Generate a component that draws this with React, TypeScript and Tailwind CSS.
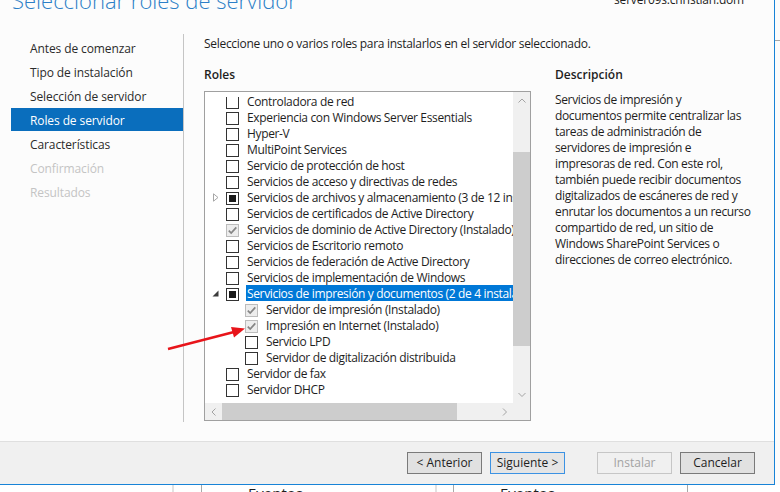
import React from "react";

type BoxState = "empty" | "ind" | "inst";

function Box({ state }: { state: BoxState }) {
  if (state === "inst")
    return (
      <span className="mt-[3px] w-[13px] h-[13px] shrink-0 border border-[#bcbcbc] bg-[#ededed] flex items-center justify-center">
        <svg width="11" height="11" viewBox="0 0 11 11">
          <path d="M1.8 5.6 L4.2 8 L9.3 2.4" fill="none" stroke="#858585" strokeWidth="1.7" />
        </svg>
      </span>
    );
  if (state === "ind")
    return (
      <span className="mt-[3px] w-[13px] h-[13px] shrink-0 border border-[#333333] bg-white flex items-center justify-center">
        <span className="w-[7px] h-[7px] bg-[#1a1a1a]" />
      </span>
    );
  return <span className="mt-[3px] w-[13px] h-[13px] shrink-0 border border-[#333333] bg-white" />;
}

function Collapsed() {
  return (
    <svg width="6" height="9" viewBox="0 0 6 9" className="ml-[2px]">
      <path d="M0.5 0.8 L5 4.5 L0.5 8.2 Z" fill="none" stroke="#a6a6a6" strokeWidth="1" />
    </svg>
  );
}

function Expanded() {
  return (
    <svg width="7" height="7" viewBox="0 0 7 7" className="ml-[1px]">
      <path d="M6.5 0.5 L6.5 6.5 L0.5 6.5 Z" fill="#3c3c3c" />
    </svg>
  );
}

type RowDef = {
  label: string;
  level: 1 | 2;
  state: BoxState;
  exp?: "c" | "e";
  selected?: boolean;
};

const rows: RowDef[] = [
  { label: "Controladora de red", level: 1, state: "empty" },
  { label: "Experiencia con Windows Server Essentials", level: 1, state: "empty" },
  { label: "Hyper-V", level: 1, state: "empty" },
  { label: "MultiPoint Services", level: 1, state: "empty" },
  { label: "Servicio de protección de host", level: 1, state: "empty" },
  { label: "Servicios de acceso y directivas de redes", level: 1, state: "empty" },
  { label: "Servicios de archivos y almacenamiento (3 de 12 instalados)", level: 1, state: "ind", exp: "c" },
  { label: "Servicios de certificados de Active Directory", level: 1, state: "empty" },
  { label: "Servicios de dominio de Active Directory (Instalado)", level: 1, state: "inst" },
  { label: "Servicios de Escritorio remoto", level: 1, state: "empty" },
  { label: "Servicios de federación de Active Directory", level: 1, state: "empty" },
  { label: "Servicios de implementación de Windows", level: 1, state: "empty" },
  { label: "Servicios de impresión y documentos (2 de 4 instalados)", level: 1, state: "ind", exp: "e", selected: true },
  { label: "Servidor de impresión (Instalado)", level: 2, state: "inst" },
  { label: "Impresión en Internet (Instalado)", level: 2, state: "inst" },
  { label: "Servicio LPD", level: 2, state: "empty" },
  { label: "Servidor de digitalización distribuida", level: 2, state: "empty" },
  { label: "Servidor de fax", level: 1, state: "empty" },
  { label: "Servidor DHCP", level: 1, state: "empty" },
];

function Row({ r }: { r: RowDef }) {
  return (
    <div className={r.level === 2 ? "h-[16px] flex items-start pl-[25px]" : "h-[16px] flex items-start pl-[6px]"}>
      <span className="w-[15px] h-[16px] shrink-0 flex items-center">
        {r.exp === "c" ? <Collapsed /> : r.exp === "e" ? <Expanded /> : null}
      </span>
      <Box state={r.state} />
      <span
        className={
          r.selected
            ? "ml-[7px] pl-[1px] pt-[1px] h-[16px] flex-1 min-w-0 overflow-hidden whitespace-nowrap bg-[#0078d7] text-white"
            : "ml-[7px] pl-[1px] pt-[1px] h-[16px] flex-1 min-w-0 overflow-hidden whitespace-nowrap"
        }
      >
        {r.label}
      </span>
    </div>
  );
}

function Chevron({ dir }: { dir: "up" | "down" | "left" | "right" }) {
  const d =
    dir === "up"
      ? "M0.5 4.5 L4 1 L7.5 4.5"
      : dir === "down"
      ? "M0.5 1 L4 4.5 L7.5 1"
      : dir === "left"
      ? "M4.5 0.5 L1 4 L4.5 7.5"
      : "M1 0.5 L4.5 4 L1 7.5";
  const vert = dir === "up" || dir === "down";
  return (
    <svg width={vert ? 8 : 6} height={vert ? 6 : 8} viewBox={vert ? "0 0 8 6" : "0 0 6 8"}>
      <path d={d} fill="none" stroke="#a3a3a3" strokeWidth="1" />
    </svg>
  );
}

function ListBox() {
  return (
    <div className="w-[327px] h-[330px] border border-[#a0a0a0] bg-white flex flex-col">
      <div className="flex h-[311px]">
        <div className="flex-1 min-w-0 pt-[5px] flex flex-col">
          <div className="flex-1 overflow-hidden">
            <div className="mt-[-4px] tracking-[-0.35px]">
              {rows.map((r, i) => (
                <Row key={i} r={r} />
              ))}
            </div>
          </div>
        </div>
        <div className="w-[17px] h-[311px] bg-[#f0f0f0] flex flex-col">
          <div className="h-[17px] flex items-center justify-center">
            <Chevron dir="up" />
          </div>
          <div className="h-[43px]" />
          <div className="h-[194px] bg-[#cdcdcd]" />
          <div className="h-[40px]" />
          <div className="h-[17px] flex items-center justify-center">
            <Chevron dir="down" />
          </div>
        </div>
      </div>
      <div className="flex h-[17px] bg-[#f0f0f0]">
        <div className="w-[17px] flex items-center justify-center">
          <Chevron dir="left" />
        </div>
        <div className="w-[235px] bg-[#cdcdcd]" />
        <div className="w-[39px]" />
        <div className="w-[17px] flex items-center justify-center">
          <Chevron dir="right" />
        </div>
        <div className="w-[17px]" />
      </div>
    </div>
  );
}

const navItems: { label: string; kind: "n" | "s" | "d" }[] = [
  { label: "Antes de comenzar", kind: "n" },
  { label: "Tipo de instalación", kind: "n" },
  { label: "Selección de servidor", kind: "n" },
  { label: "Roles de servidor", kind: "s" },
  { label: "Características", kind: "n" },
  { label: "Confirmación", kind: "d" },
  { label: "Resultados", kind: "d" },
];

const descLines = [
  "Servicios de impresión y",
  "documentos permite centralizar las",
  "tareas de administración de",
  "servidores de impresión e",
  "impresoras de red. Con este rol,",
  "también puede recibir documentos",
  "digitalizados de escáneres de red y",
  "enrutar los documentos a un recurso",
  "compartido de red, un sitio de",
  "Windows SharePoint Services o",
  "direcciones de correo electrónico.",
];

export default function App() {
  return (
    <div className="relative w-[780px] h-[492px] overflow-hidden bg-[#fcfcfc] font-['Open_Sans',sans-serif] text-[12px] leading-[16px] text-[#1e1e1e]">
      <div className="flex h-[485px]">
        <div className="w-[775px] h-[485px] flex flex-col border-r border-b border-[#1883d7]">
          <div className="h-[441px] flex flex-col">
            {/* header */}
            <div className="h-[34px] flex items-start">
              <div className="ml-[12px] mt-[-16px] text-[22px] leading-[32px] font-light text-[#2c7fc7] whitespace-nowrap">
                Seleccionar roles de servidor
              </div>
              <div className="ml-auto mr-[30px] mt-[-8px] whitespace-nowrap tracking-[-0.2px] text-[#1e1e1e]">
                server09s.christian.dom
              </div>
            </div>
            {/* body */}
            <div className="flex">
              <div className="w-[184px] h-[388px] border-r border-[#c5c5c5] pl-[11px] pt-[2px] flex flex-col gap-[1px] tracking-[-0.1px]">
                {navItems.map((n) => (
                  <div
                    key={n.label}
                    className={
                      n.kind === "s"
                        ? "h-[23px] pl-[19px] pt-[2px] flex items-center bg-[#0a6ebd] text-white"
                        : n.kind === "d"
                        ? "h-[23px] pl-[19px] pt-[2px] flex items-center text-[#c4c4c4]"
                        : "h-[23px] pl-[19px] pt-[2px] flex items-center text-[#2b2b2b]"
                    }
                  >
                    {n.label}
                  </div>
                ))}
              </div>
              <div className="pl-[20px] pt-[2px] flex flex-col">
                <div className="h-[16px] whitespace-nowrap tracking-[-0.3px]">
                  Seleccione uno o varios roles para instalarlos en el servidor seleccionado.
                </div>
                <div className="mt-[14px] flex">
                  <div className="w-[327px] flex flex-col">
                    <div className="h-[16px] pt-[1px] font-semibold">Roles</div>
                    <div className="mt-[9px]">
                      <ListBox />
                    </div>
                  </div>
                  <div className="ml-[24px] flex flex-col">
                    <div className="h-[16px] pt-[1px] font-semibold">Descripción</div>
                    <div className="mt-[10px] flex flex-col tracking-[-0.35px]">
                      {descLines.map((l) => (
                        <div key={l} className="h-[16px] whitespace-nowrap">
                          {l}
                        </div>
                      ))}
                    </div>
                  </div>
                </div>
              </div>
            </div>
          </div>
          {/* footer */}
          <div className="h-[43px] border-t border-[#dfdfdf] bg-[#f0f0f0] pt-[10px] pl-[407px] flex items-start">
            <div className="w-[75px] h-[22px] border border-[#7a7a7a] bg-[#e1e1e1] flex items-center justify-center">
              &lt; Anterior
            </div>
            <div className="ml-[8px] w-[75px] h-[22px] border border-[#3c92e3] bg-[#e5e5e5] flex items-center justify-center">
              Siguiente &gt;
            </div>
            <div className="ml-[32px] w-[75px] h-[22px] border border-[#c6c6c6] bg-[#f0f0f0] text-[#a3a3a3] flex items-center justify-center">
              Instalar
            </div>
            <div className="ml-[8px] w-[75px] h-[22px] border border-[#7a7a7a] bg-[#e1e1e1] flex items-center justify-center">
              Cancelar
            </div>
          </div>
        </div>
        <div className="flex-1 flex flex-col">
          <div className="mt-[40px] h-px bg-[#a6a6a6]" />
        </div>
      </div>
      {/* underlying window strip */}
      <div className="flex h-[7px] bg-white">
        <div className="w-[172px]" />
        <div className="w-[2px] bg-[#e2e2e2]" />
        <div className="w-[27px]" />
        <div className="w-px bg-[#a8a8a8]" />
        <div className="w-[233px] pl-[46px]">
          <div className="mt-[-2px] text-[15px] leading-[20px] text-[#1e1e1e]">Eventos</div>
        </div>
        <div className="w-[2px] bg-[#e2e2e2]" />
        <div className="w-[16px]" />
        <div className="w-px bg-[#a8a8a8]" />
        <div className="w-[233px] pl-[46px]">
          <div className="mt-[-2px] text-[15px] leading-[20px] text-[#1e1e1e]">Eventos</div>
        </div>
        <div className="w-px bg-[#a8a8a8]" />
        <div className="flex-1" />
      </div>
      {/* red annotation arrow */}
      <svg className="absolute left-0 top-0 pointer-events-none" width="780" height="492" viewBox="0 0 780 492">
        <line x1="168" y1="349" x2="234" y2="332" stroke="#e8141a" strokeWidth="2.5" />
        <path d="M245 328.5 L231 327 L234 337.5 Z" fill="#e8141a" />
      </svg>
    </div>
  );
}
